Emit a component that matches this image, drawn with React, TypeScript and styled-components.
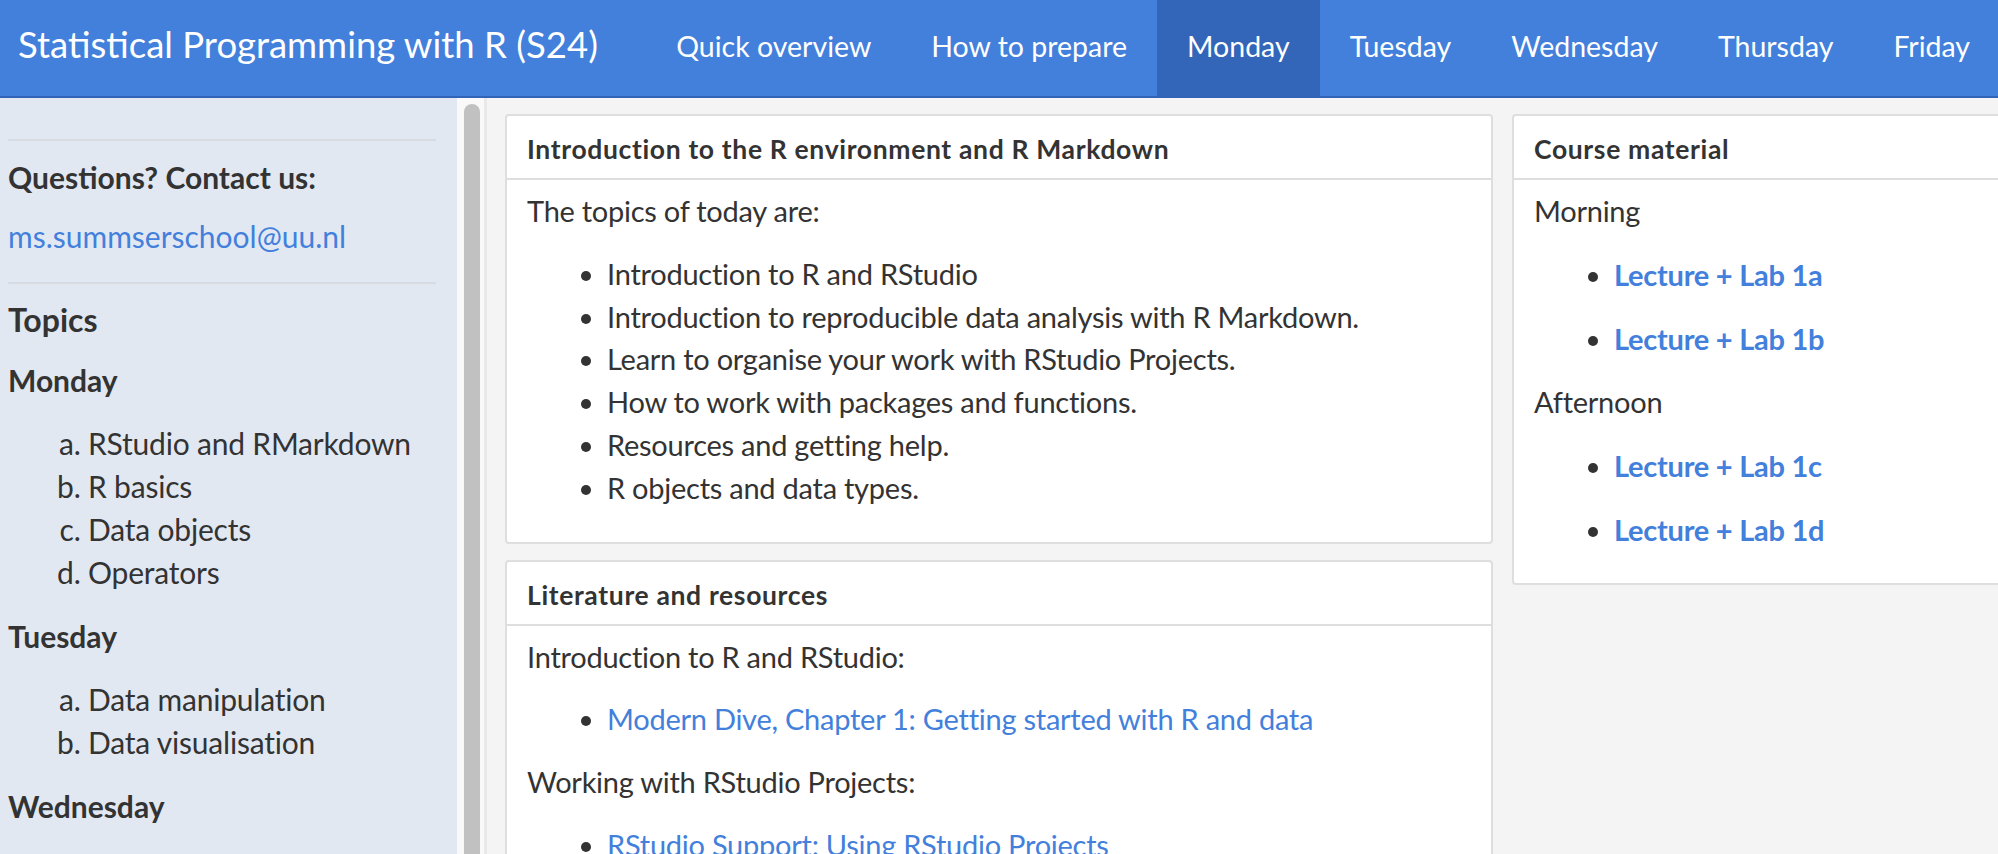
import React from "react";
import styled, { createGlobalStyle } from "styled-components";

const GlobalStyle = createGlobalStyle`
  html, body { margin: 0; padding: 0; }
  * { box-sizing: border-box; }
  body {
    font-family: Lato, "Noto Sans", sans-serif;
    color: #333;
    background: #f4f4f4;
    width: 1998px;
    height: 854px;
    overflow: hidden;
  }
`;

const Page = styled.div`
  display: flex;
  flex-direction: column;
  width: 1998px;
  height: 854px;
  overflow: hidden;
`;

const Navbar = styled.header`
  display: flex;
  align-items: stretch;
  flex-shrink: 0;
  height: 98px;
  padding-left: 18px;
  background: #4380dc;
  border-bottom: 2px solid #3363b7;
`;

const Brand = styled.div`
  display: flex;
  align-items: center;
  flex: 1;
  padding-bottom: 8px;
  font-size: 36.5px;
  color: #fff;
  white-space: nowrap;
`;

const NavMenu = styled.nav`
  display: flex;
  margin-right: -2px;
`;

const NavLink = styled.a<{ $active?: boolean }>`
  display: flex;
  align-items: center;
  padding: 0 30px 5px;
  font-size: 28.5px;
  color: #fff;
  text-decoration: none;
  white-space: nowrap;
  background: ${(p) => (p.$active ? "#3366b8" : "transparent")};
`;

const Body = styled.div`
  display: flex;
  flex: 1;
  min-height: 0;
`;

const Sidebar = styled.aside`
  width: 457px;
  flex-shrink: 0;
  padding: 41px 21px 0 8px;
  background: #e2e8f2;
  overflow: hidden;
  font-size: 30px;
  line-height: 43px;
`;

const Rule = styled.hr`
  margin: 0;
  border: 0;
  border-top: 2px solid #d8dce2;
`;

const SideTitle = styled.div<{ $size?: number; $mt?: number; $mb?: number }>`
  font-weight: 700;
  font-size: ${(p) => p.$size ?? 30}px;
  margin: ${(p) => p.$mt ?? 0}px 0 ${(p) => p.$mb ?? 20}px;
`;

const SideText = styled.p<{ $mb?: number }>`
  margin: 0 0 ${(p) => p.$mb ?? 20}px;
`;

const TopicList = styled.ol`
  margin: 0 0 21px;
  padding-left: 80px;
  list-style-type: lower-alpha;
  letter-spacing: -0.2px;
`;

const ScrollTrack = styled.div`
  width: 30px;
  flex-shrink: 0;
  padding: 6px 0 0 7px;
  background: #f9f9f9;
  border-right: 3px solid #e9e9e9;
  overflow: hidden;
`;

const ScrollThumb = styled.div`
  width: 16px;
  height: calc(100% + 20px);
  border-radius: 8px;
  background: #c1c1c1;
`;

const Main = styled.main`
  flex: 1;
  display: grid;
  grid-template-columns: 988px 520px;
  column-gap: 19px;
  align-items: start;
  padding: 16px 0 0 18px;
  overflow: hidden;
`;

const Column = styled.div`
  display: flex;
  flex-direction: column;
  gap: 16px;
`;

const Card = styled.section`
  background: #fff;
  border: 2px solid #dedede;
  border-radius: 4px;
`;

const CardHeader = styled.div`
  padding: 15px 20px 10px;
  font-size: 26.5px;
  line-height: 37px;
  font-weight: 700;
  letter-spacing: 0.65px;
  border-bottom: 2px solid #dedede;
`;

const CardBody = styled.div`
  padding: 10px 20px;
  font-size: 29px;
  line-height: 42.8px;
  letter-spacing: -0.25px;
`;

const Para = styled.p<{ $mb?: number }>`
  margin: 0 0 ${(p) => p.$mb ?? 20}px;
`;

const BulletList = styled.ul<{ $mb?: number }>`
  margin: 0 0 ${(p) => p.$mb ?? 20}px;
  padding-left: 80px;
  list-style-type: disc;
`;

const Link = styled.a<{ $strong?: boolean }>`
  color: #4380dc;
  text-decoration: none;
  font-weight: ${(p) => (p.$strong ? 700 : 400)};
`;

const navItems = [
  "Quick overview",
  "How to prepare",
  "Monday",
  "Tuesday",
  "Wednesday",
  "Thursday",
  "Friday",
];

const topics: { day: string; items: string[] }[] = [
  { day: "Monday", items: ["RStudio and RMarkdown", "R basics", "Data objects", "Operators"] },
  { day: "Tuesday", items: ["Data manipulation", "Data visualisation"] },
  { day: "Wednesday", items: ["Exploratory data analysis", "Statistical models"] },
];

const todayTopics = [
  "Introduction to R and RStudio",
  "Introduction to reproducible data analysis with R Markdown.",
  "Learn to organise your work with RStudio Projects.",
  "How to work with packages and functions.",
  "Resources and getting help.",
  "R objects and data types.",
];

export default function App() {
  return (
    <Page>
      <GlobalStyle />
      <Navbar>
        <Brand>Statistical Programming with R (S24)</Brand>
        <NavMenu>
          {navItems.map((n) => (
            <NavLink key={n} href="#" $active={n === "Monday"}>
              {n}
            </NavLink>
          ))}
        </NavMenu>
      </Navbar>
      <Body>
        <Sidebar>
          <Rule />
          <SideTitle $mt={15} $mb={16}>Questions? Contact us:</SideTitle>
          <SideText $mb={24}>
            <Link href="#">ms.summserschool@uu.nl</Link>
          </SideText>
          <Rule />
          <SideTitle $size={32} $mt={14} $mb={18}>Topics</SideTitle>
          {topics.map((t) => (
            <React.Fragment key={t.day}>
              <SideTitle>{t.day}</SideTitle>
              <TopicList>
                {t.items.map((i) => (
                  <li key={i}>{i}</li>
                ))}
              </TopicList>
            </React.Fragment>
          ))}
        </Sidebar>
        <ScrollTrack>
          <ScrollThumb />
        </ScrollTrack>
        <Main>
          <Column>
            <Card>
              <CardHeader>Introduction to the R environment and R Markdown</CardHeader>
              <CardBody>
                <Para>The topics of today are:</Para>
                <BulletList $mb={22}>
                  {todayTopics.map((t) => (
                    <li key={t}>{t}</li>
                  ))}
                </BulletList>
              </CardBody>
            </Card>
            <Card>
              <CardHeader>Literature and resources</CardHeader>
              <CardBody>
                <Para>Introduction to R and RStudio:</Para>
                <BulletList>
                  <li>
                    <Link href="#">Modern Dive, Chapter 1: Getting started with R and data</Link>
                  </li>
                </BulletList>
                <Para>Working with RStudio Projects:</Para>
                <BulletList>
                  <li>
                    <Link href="#">RStudio Support: Using RStudio Projects</Link>
                  </li>
                </BulletList>
                <Para>Getting help:</Para>
              </CardBody>
            </Card>
          </Column>
          <Column>
            <Card>
              <CardHeader>Course material</CardHeader>
              <CardBody>
                <Para $mb={21}>Morning</Para>
                <BulletList $mb={0}>
                  <li>
                    <Para $mb={21}>
                      <Link href="#" $strong>Lecture + Lab 1a</Link>
                    </Para>
                  </li>
                  <li>
                    <Para $mb={21}>
                      <Link href="#" $strong>Lecture + Lab 1b</Link>
                    </Para>
                  </li>
                </BulletList>
                <Para $mb={21}>Afternoon</Para>
                <BulletList $mb={0}>
                  <li>
                    <Para $mb={21}>
                      <Link href="#" $strong>Lecture + Lab 1c</Link>
                    </Para>
                  </li>
                  <li>
                    <Para $mb={21}>
                      <Link href="#" $strong>Lecture + Lab 1d</Link>
                    </Para>
                  </li>
                </BulletList>
              </CardBody>
            </Card>
          </Column>
        </Main>
      </Body>
    </Page>
  );
}
